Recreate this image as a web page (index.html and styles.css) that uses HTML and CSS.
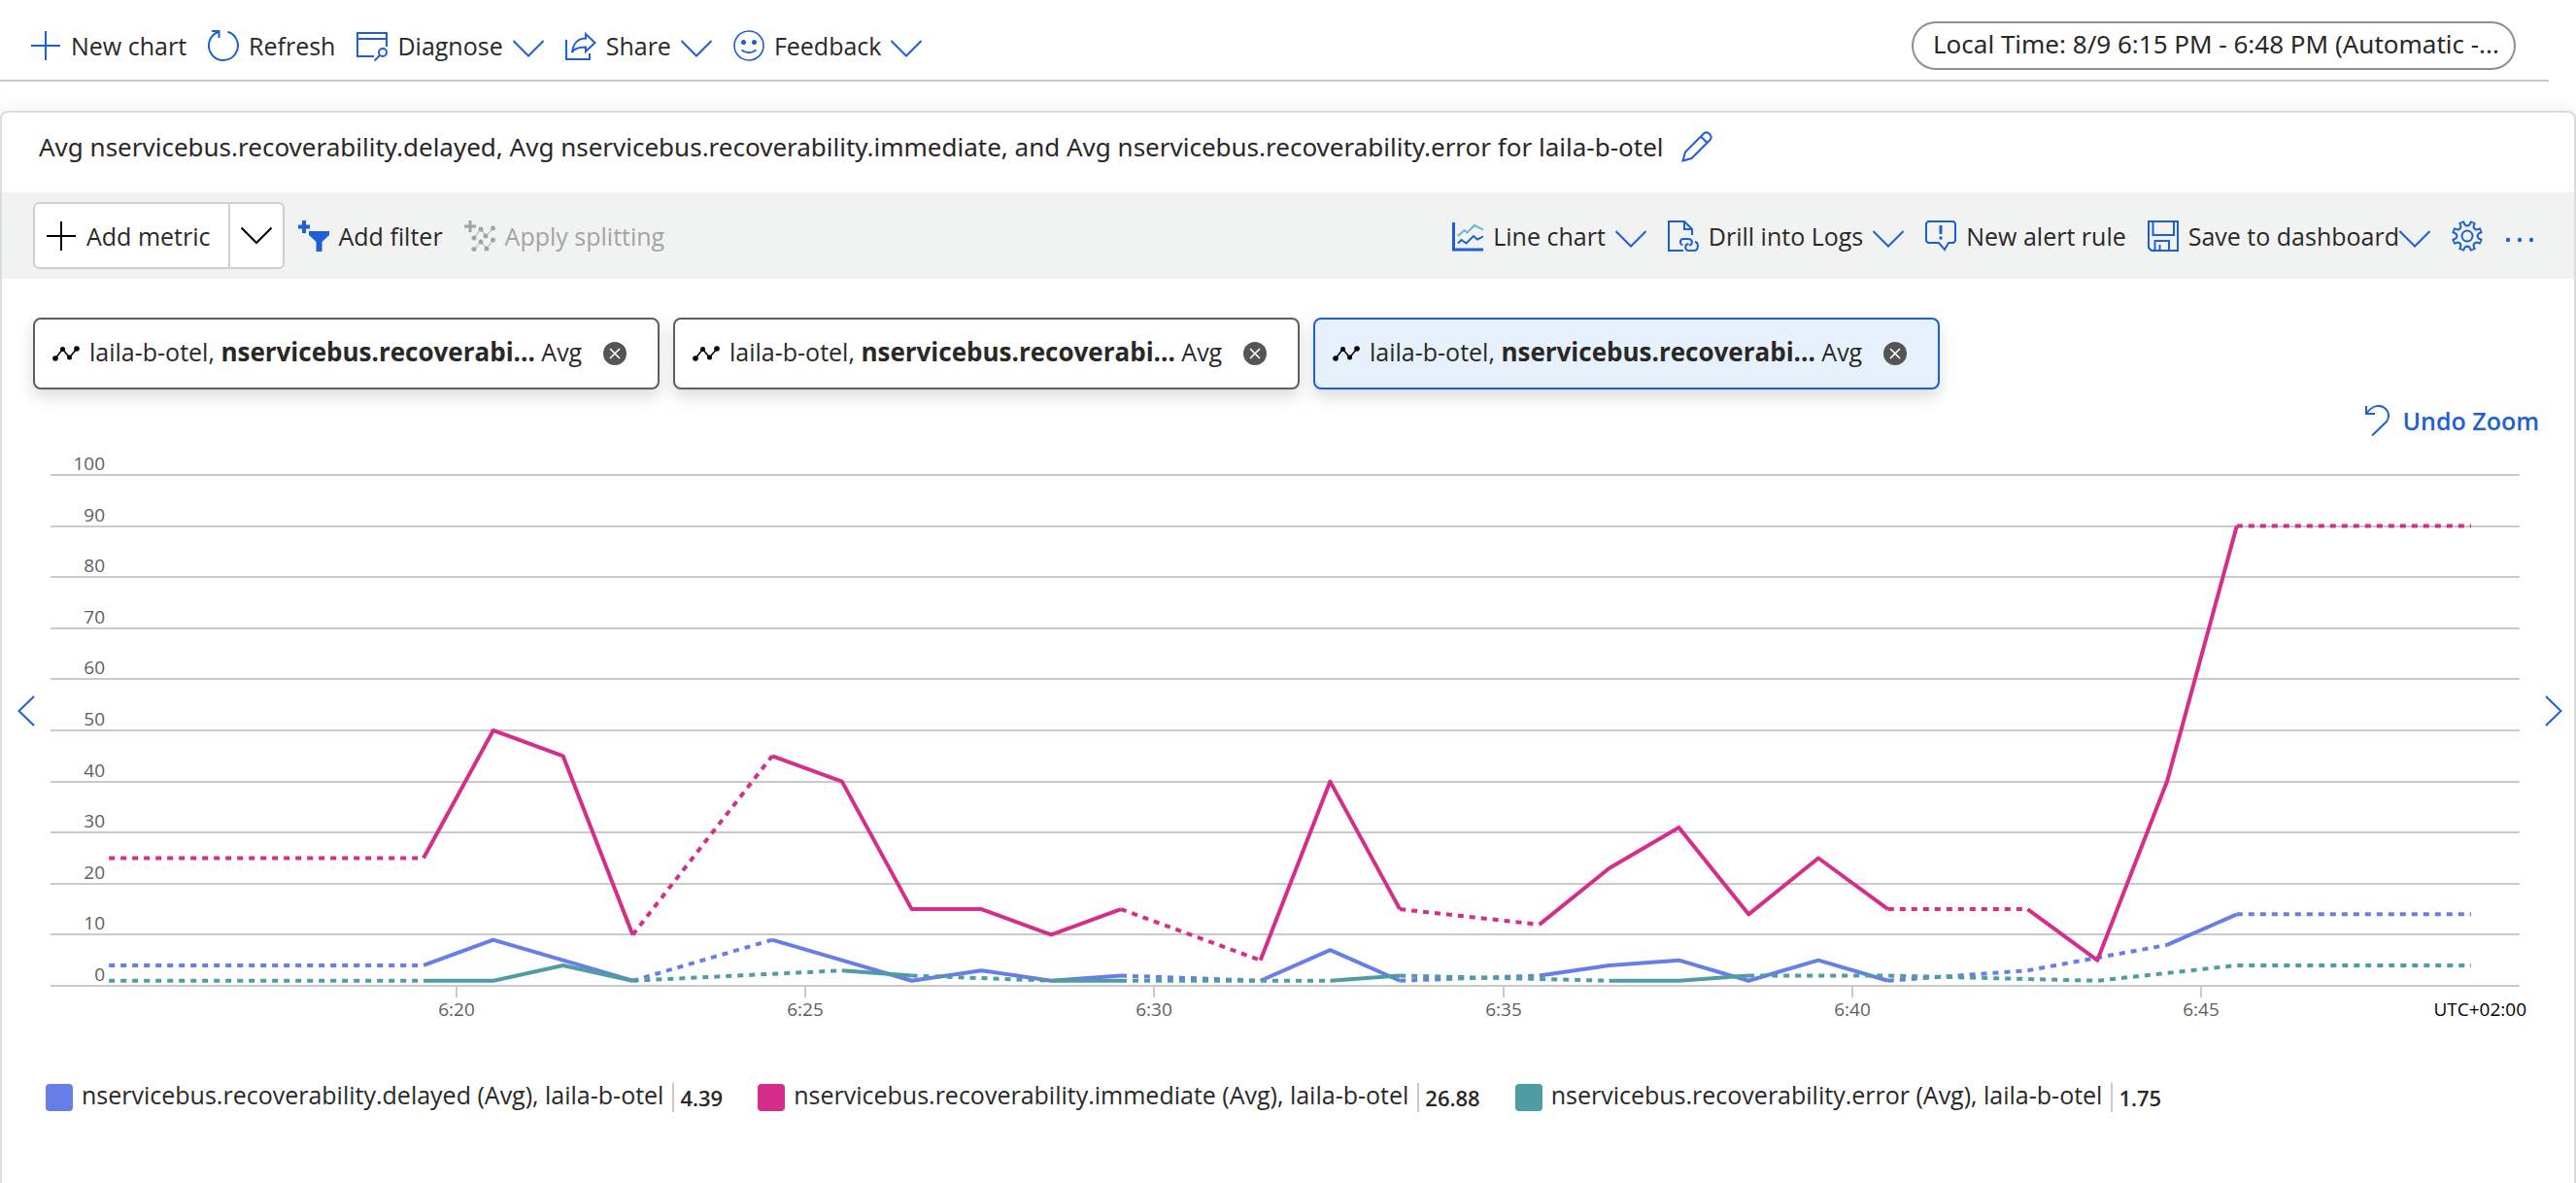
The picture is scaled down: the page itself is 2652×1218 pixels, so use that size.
FILE: index.html
```
<!DOCTYPE html>
<html lang="en">
<head>
<meta charset="utf-8">
<meta name="viewport" content="width=device-width, initial-scale=1">
<title>Metrics</title>
<link rel="stylesheet" href="styles.css">
</head>
<body>
<svg class="defs" aria-hidden="true">
  <defs>
    <symbol id="plus" viewBox="0 0 32 32"><path d="M16 1V31M1 16H31"/></symbol>
    <symbol id="chevron" viewBox="0 0 32 32"><path d="M0.500 11L16 26.500L31.500 11"/></symbol>
    <symbol id="chevron-mid" viewBox="0 0 32 32"><path d="M0.500 7.500L16 23L31.500 7.500"/></symbol>
    <symbol id="close" viewBox="0 0 24 24"><circle cx="12" cy="12" r="12" fill="#555" stroke="none"/><path d="M7 7L17 17M17 7L7 17" stroke="#fff" stroke-width="1.600"/></symbol>
    <symbol id="metric" viewBox="0 0 28 16"><path d="M3 13L10.500 3.500L17.500 12L25 3" stroke-width="1.500"/><g fill="#000" stroke="none"><circle cx="3" cy="13" r="2.800"/><circle cx="10.500" cy="3.500" r="2.500"/><circle cx="17.500" cy="12" r="2.500"/><circle cx="25" cy="3" r="2.800"/></g></symbol>
    <path id="tooth" d="M-5.740 -13.860L-3.760 -14.520L-2.400 -11.600Q0 -9.600 2.400 -11.600L3.760 -14.520L5.740 -13.860"/>
  </defs>
</svg>

<header class="topbar">
  <nav class="commands" aria-label="Chart commands">
    <button class="command" type="button"><svg class="icon"><use href="#plus"/></svg>New chart</button>
    <button class="command" type="button"><svg class="icon" viewBox="0 0 32 32"><path d="M20.500 1.700A15 15 0 1 1 10.500 2M4 1H11.500V8"/></svg>Refresh</button>
    <button class="command" type="button"><svg class="icon" viewBox="0 0 32 32"><path d="M31 17V3H1V27H18M1 9H31"/><circle cx="27" cy="23" r="4"/><path d="M24 26L18.500 31.500"/></svg>Diagnose<svg class="icon"><use href="#chevron"/></svg></button>
    <button class="command" type="button"><svg class="icon" viewBox="0 0 32 32"><path d="M1 10V30H25V24"/><path d="M21 4L30.500 13L21 22V17.500C14 17.500 9 18.500 7 23C8 14 13 8.500 21 8.500Z"/></svg>Share<svg class="icon"><use href="#chevron"/></svg></button>
    <button class="command" type="button"><svg class="icon" viewBox="0 0 32 32"><circle cx="16" cy="16" r="15" stroke-width="1.600"/><circle cx="10.500" cy="12.500" r="2.500" fill="currentColor" stroke="none"/><circle cx="21.500" cy="12.500" r="2.500" fill="currentColor" stroke="none"/><path d="M8.500 20.500Q16 26 23.500 20.500"/></svg>Feedback<svg class="icon"><use href="#chevron"/></svg></button>
  </nav>
  <button class="time-range" type="button">Local Time: 8/9 6:15 PM - 6:48 PM (Automatic -...</button>
</header>

<main class="card">
  <div class="title-row">
    <h1 class="title">Avg nservicebus.recoverability.delayed, Avg nservicebus.recoverability.immediate, and Avg nservicebus.recoverability.error for laila-b-otel</h1>
    <button class="icon-button" type="button" aria-label="Edit title"><svg class="icon" viewBox="0 0 32 32"><path d="M1.500 30.500L4 21.500L23 2.500Q26 0 29 3Q32 6 29.500 9L10.500 28ZM20 5.500L26.500 12"/></svg></button>
  </div>

  <div class="toolbar">
    <div class="commands">
      <div class="split">
        <button class="split-main" type="button"><svg class="icon"><use href="#plus"/></svg>Add metric</button>
        <button class="split-more" type="button" aria-label="More metric options"><svg class="icon"><use href="#chevron-mid"/></svg></button>
      </div>
      <button class="command" type="button"><svg class="icon" viewBox="0 0 32 32"><path d="M6 0V13M0 6.500H12" stroke-width="4"/><path d="M11 11H32V15L24.500 22V32H18.500V22L11 15Z" fill="currentColor" stroke="none"/></svg>Add filter</button>
      <button class="command" type="button" disabled><svg class="icon" viewBox="0 0 32 32"><path d="M6 0V12M0 6H12" stroke-width="3"/><path d="M10 18L17 9L22 16L30 8M10 30L17 22L23 29L30 20" stroke-width="1"/><g fill="currentColor" stroke="none"><circle cx="10" cy="18" r="2.500"/><circle cx="17" cy="9" r="2.500"/><circle cx="22" cy="16" r="2.500"/><circle cx="29.500" cy="8" r="2.500"/><circle cx="10" cy="29.500" r="2.500"/><circle cx="17" cy="22" r="2.500"/><circle cx="23" cy="29" r="2.500"/><circle cx="29.500" cy="20" r="2.500"/></g></svg>Apply splitting</button>
    </div>
    <div class="commands">
      <button class="command" type="button"><svg class="icon" viewBox="0 0 32 32"><path d="M1.500 2V30H32" stroke-width="3"/><path d="M6 16L12.500 10L15.500 12.500L23 5L32 9.500" stroke="#6bb1d6"/><path d="M6 23.500L9.500 20L14.500 23.500L22 16L26 19.500L32 16.500"/></svg>Line chart<svg class="icon"><use href="#chevron"/></svg></button>
      <button class="command" type="button"><svg class="icon" viewBox="0 0 32 32"><path d="M16 31H1V1H17L25 9V15M17 1V9H25"/><path d="M15.500 25C12 25 12 19 16 19H21C26 19 26 25 22 25.500M28 22C32 22.500 32 31 27 31H22C17 31 17 24.500 21.500 24"/></svg>Drill into Logs<svg class="icon"><use href="#chevron"/></svg></button>
      <button class="command" type="button"><svg class="icon" viewBox="0 0 32 32"><path d="M3 1H29L31 3V21L29 23H24L20 30L14 23H3L1 21V3Z"/><path d="M16 5V14M16 16.500V19.500" stroke-width="3"/></svg>New alert rule</button>
      <button class="command tight" type="button"><svg class="icon" viewBox="0 0 32 32"><path d="M1 1H31V31H4L1 28ZM5.500 1V15H27V1M7.500 31V21H22V31M12.500 31V25"/></svg><span>Save to dashboard</span><svg class="icon"><use href="#chevron"/></svg></button>
      <button class="icon-button" type="button" aria-label="Chart settings"><svg class="icon" viewBox="-16 -16 32 32"><circle r="5.500"/><use href="#tooth"/><use href="#tooth" transform="rotate(45)"/><use href="#tooth" transform="rotate(90)"/><use href="#tooth" transform="rotate(135)"/><use href="#tooth" transform="rotate(180)"/><use href="#tooth" transform="rotate(225)"/><use href="#tooth" transform="rotate(270)"/><use href="#tooth" transform="rotate(315)"/></svg></button>
      <button class="icon-button" type="button" aria-label="More"><svg class="icon" viewBox="0 0 32 32"><g fill="currentColor" stroke="none"><circle cx="4" cy="20" r="2.200"/><circle cx="16" cy="20" r="2.200"/><circle cx="28" cy="20" r="2.200"/></g></svg></button>
    </div>
  </div>

  <div class="tags">
    <div class="tag"><svg class="tag-icon"><use href="#metric"/></svg><span class="tag-text">laila-b-otel, <b>nservicebus.recoverabi...</b> Avg</span><button class="tag-close" type="button" aria-label="Remove metric"><svg><use href="#close"/></svg></button></div>
    <div class="tag"><svg class="tag-icon"><use href="#metric"/></svg><span class="tag-text">laila-b-otel, <b>nservicebus.recoverabi...</b> Avg</span><button class="tag-close" type="button" aria-label="Remove metric"><svg><use href="#close"/></svg></button></div>
    <div class="tag selected"><svg class="tag-icon"><use href="#metric"/></svg><span class="tag-text">laila-b-otel, <b>nservicebus.recoverabi...</b> Avg</span><button class="tag-close" type="button" aria-label="Remove metric"><svg><use href="#close"/></svg></button></div>
  </div>

  <div class="undo-row">
    <button class="undo" type="button"><svg class="icon" viewBox="0 0 32 32"><path d="M5 1V9H14M5 9C12 -1 20 0 24 3C29 7 29 13 26 17L11 31.500"/></svg>Undo Zoom</button>
  </div>

  <div class="chart-row">
    <button class="pan pan-left" type="button" aria-label="Pan left"><svg viewBox="0 0 18 32"><path d="M17 1L1.500 16L17 31"/></svg></button>
    <svg class="chart" id="chart" viewBox="52 461 2552 600" role="img" aria-label="Average of delayed, immediate and error metrics over time"></svg>
    <button class="pan pan-right" type="button" aria-label="Pan right"><svg viewBox="0 0 18 32"><path d="M1 1L16.500 16L1 31"/></svg></button>
  </div>

  <ul class="legend">
    <li class="series"><span class="swatch delayed"></span><span class="series-name">nservicebus.recoverability.delayed (Avg), laila-b-otel</span><span class="value">4.39</span></li>
    <li class="series"><span class="swatch immediate"></span><span class="series-name">nservicebus.recoverability.immediate (Avg), laila-b-otel</span><span class="value">26.88</span></li>
    <li class="series"><span class="swatch error"></span><span class="series-name">nservicebus.recoverability.error (Avg), laila-b-otel</span><span class="value">1.75</span></li>
  </ul>
</main>
<script src="chart.js"></script>
</body>
</html>
```
FILE: styles.css
```
:root {
  --blue: #1f5fd6;
  --text: #292827;
  --line: #cacaca;
}

* {
  box-sizing: border-box;
}

body {
  margin: 0;
  background: #fff;
  color: var(--text);
  font-family: "Open Sans", "Noto Sans", sans-serif;
  font-size: 25px;
  line-height: 34px;
}

button {
  margin: 0;
  padding: 0;
  border: 0;
  background: none;
  color: inherit;
  font: inherit;
  white-space: nowrap;
}

svg {
  display: block;
  fill: none;
  stroke: currentColor;
  stroke-width: 2;
}

.defs {
  display: none;
}

.icon {
  flex: none;
  width: 32px;
  height: 32px;
  color: var(--blue);
}

.topbar {
  display: flex;
  justify-content: space-between;
  align-items: center;
  margin-right: 28px;
  padding: 22px 34px 10px 31px;
  border-bottom: 2px solid var(--line);
}

.commands {
  display: flex;
  align-items: center;
  gap: 22px;
}

.command,
.undo {
  display: flex;
  align-items: center;
  gap: 10px;
}

.command:disabled,
.command:disabled .icon {
  color: #a3a3a3;
}

.tight {
  gap: 0;
}

.tight span {
  margin-left: 10px;
}

.time-range {
  width: 622px;
  height: 50px;
  padding: 0 20px 5px;
  overflow: hidden;
  border: 2px solid #8f8f8f;
  border-radius: 25px;
  font-family: "Noto Sans", sans-serif;
  text-align: left;
  font-size: 26px;
}

.card {
  margin-top: 30px;
  padding-bottom: 74px;
  border: 2px solid #dcdcdc;
  border-bottom: 0;
  border-radius: 8px 8px 0 0;
  box-shadow: 0 0 20px rgba(0, 0, 0, 0.08);
}

.title-row {
  display: flex;
  align-items: center;
  gap: 18px;
  padding: 18px 38px 30px;
}

.title {
  margin: 0;
  font-family: "Noto Sans", sans-serif;
  font-size: 26px;
  font-weight: 400;
}

.toolbar {
  display: flex;
  justify-content: space-between;
  align-items: center;
  padding: 10px 40px 10px 32px;
  background: #f1f3f2;
}

.split {
  display: flex;
  height: 69px;
  margin-right: -8px;
  border: 2px solid #cfcfcf;
  border-radius: 6px;
  background: #fff;
}

.split .icon {
  color: #000;
}

.split-main {
  display: flex;
  align-items: center;
  gap: 10px;
  padding: 0 18px 0 11px;
  border-right: 2px solid #cfcfcf;
}

.split-more {
  padding: 0 11px;
}

.tags {
  display: flex;
  gap: 14px;
  padding: 40px 32px 0;
}

.tag {
  display: flex;
  align-items: center;
  width: 645px;
  height: 74px;
  padding: 0 32px 0 18px;
  border: 2px solid #605e5c;
  border-radius: 8px;
  background: #fff;
  box-shadow: 0 8px 16px rgba(0, 0, 0, 0.14);
}

.selected {
  border-color: var(--blue);
  background: #e6f1fb;
}

.tag-icon {
  flex: none;
  width: 28px;
  height: 16px;
  color: #000;
}

.tag-text {
  margin: 0 auto 5px 10px;
  white-space: nowrap;
}

.tag-text b {
  font-size: 26px;
}

.tag-close svg {
  width: 24px;
  height: 24px;
}

.undo-row {
  display: flex;
  justify-content: flex-end;
  padding: 15px 36px 11px;
}

.undo {
  color: var(--blue);
  font-weight: 600;
}

.chart-row {
  display: flex;
  align-items: center;
}

.chart {
  flex: 1;
  min-width: 0;
}

.pan {
  display: flex;
  flex: none;
  width: 50px;
  margin-bottom: 58px;
  padding: 0 16px;
  color: var(--blue);
}

.pan-right {
  width: 46px;
}

.pan svg {
  flex: none;
  width: 18px;
  height: 32px;
}

.grid {
  stroke: var(--line);
}

.axis-label {
  fill: #605e5c;
  stroke: none;
  font-size: 19px;
}

.zone {
  fill: #000;
}

.line {
  stroke-width: 4;
  stroke-linejoin: round;
}

.gap {
  stroke-dasharray: 6 6;
}

.line.delayed {
  stroke: #677ee8;
}

.line.immediate {
  stroke: #d42e8a;
}

.line.error {
  stroke: #4f9da2;
}

.legend {
  display: flex;
  gap: 36px;
  margin: 0;
  padding: 49px 45px 0;
  list-style: none;
}

.series {
  display: flex;
  align-items: center;
  gap: 9px;
  white-space: nowrap;
}

.swatch {
  width: 28px;
  height: 28px;
  border-radius: 4px;
}

.swatch.delayed {
  background: #677ee8;
}

.swatch.immediate {
  background: #d42e8a;
}

.swatch.error {
  background: #4f9da2;
}

.series-name {
  padding-bottom: 5px;
}

.value {
  padding-left: 6px;
  border-left: 2px solid var(--line);
  font-size: 22px;
  font-weight: 600;
  line-height: 30px;
}
```
FILE: chart.js
```
const chart = document.getElementById('chart');
const NS = 'http://www.w3.org/2000/svg';

function add(name, attrs, text) {
  const el = document.createElementNS(NS, name);
  for (const key in attrs) el.setAttribute(key, attrs[key]);
  if (text) el.textContent = text;
  chart.appendChild(el);
}

const yOf = v => 1015 - v * 5.26;
// Minutes are counted from 6:19:30, the first collected sample.
const xOf = m => 436 + m * 71.8;

for (let v = 0; v <= 100; v += 10) {
  const y = Math.round(yOf(v));
  add('line', { class: 'grid', x1: 52, x2: 2594, y1: y, y2: y });
  add('text', { class: 'axis-label', x: 108, y: y - 5, 'text-anchor': 'end' }, String(v));
}

['6:20', '6:25', '6:30', '6:35', '6:40', '6:45'].forEach((label, i) => {
  const x = Math.round(470 + i * 359.2);
  add('line', { class: 'grid', x1: x, x2: x, y1: 1016, y2: 1027 });
  add('text', { class: 'axis-label', x: x, y: 1046, 'text-anchor': 'middle' }, label);
});
add('text', { class: 'axis-label zone', x: 2601, y: 1046, 'text-anchor': 'end' }, 'UTC+02:00');

// Each sample is [minute, value]; a third item marks a gap before the sample.
const START = -4.51, END = 29.36;
const series = {
  delayed: [[START, 4], [0, 4, 1], [1, 9], [2, 5], [3, 1], [5, 9, 1], [6, 5], [7, 1], [8, 3], [9, 1], [10, 2], [12, 1, 1], [13, 7], [14, 1], [16, 2, 1], [17, 4], [18, 5], [19, 1], [20, 5], [21, 1], [23, 3, 1], [25, 8, 1], [26, 14], [END, 14, 1]],
  immediate: [[START, 25], [0, 25, 1], [1, 50], [2, 45], [3, 10], [5, 45, 1], [6, 40], [7, 15], [8, 15], [9, 10], [10, 15], [12, 5, 1], [13, 40], [14, 15], [16, 12, 1], [17, 23], [18, 31], [19, 14], [20, 25], [21, 15], [23, 15, 1], [24, 5], [25, 40], [26, 90], [END, 90, 1]],
  error: [[START, 1], [0, 1, 1], [1, 1], [2, 4], [3, 1], [6, 3, 1], [7, 2], [9, 1, 1], [10, 1], [12, 1, 1], [13, 1, 1], [14, 2], [17, 1, 1], [18, 1], [19, 2], [21, 2, 1], [24, 1, 1], [26, 4, 1], [END, 4, 1]]
};

for (const name in series) {
  const samples = series[name];
  let solid = '', gaps = '', lastSolid = false, lastGap = false;
  for (let i = 1; i < samples.length; i++) {
    const [m0, v0] = samples[i - 1], [m1, v1, gap] = samples[i];
    const from = 'M' + xOf(m0) + ' ' + yOf(v0), to = 'L' + xOf(m1) + ' ' + yOf(v1);
    if (gap) {
      gaps += (lastGap ? '' : from) + to;
    } else {
      solid += (lastSolid ? '' : from) + to;
    }
    lastGap = !!gap;
    lastSolid = !gap;
  }
  add('path', { class: 'line ' + name, d: solid });
  add('path', { class: 'line gap ' + name, d: gaps });
}
```
